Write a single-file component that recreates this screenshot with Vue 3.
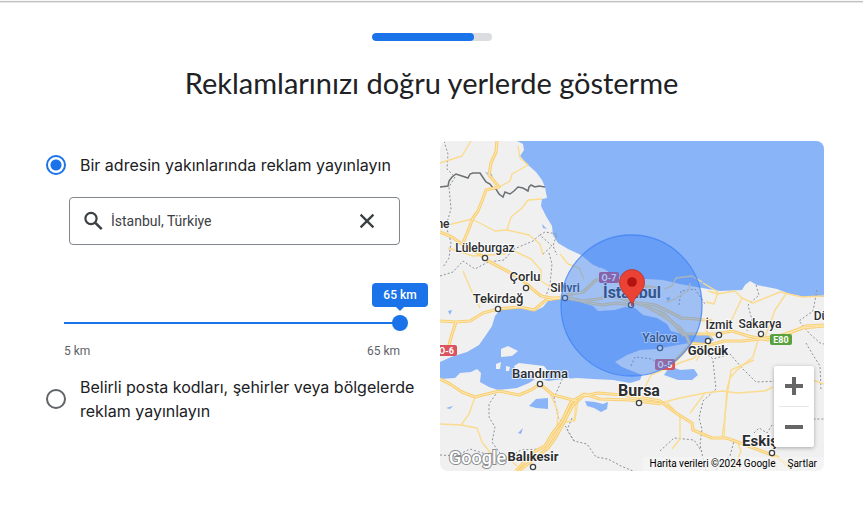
<script setup>
import { ref } from 'vue'

const mode = ref('near')
const place = ref('İstanbul, Türkiye')
const radius = ref(65)

const highways = [
  'M497 141 L496 152 L491 163 L489 175 L499 187 L486 190 L482 201 L478 211 L473 218 L468 231 L463 243',
  'M440 232 L452 237 L466 247 L478 253 L490 262 L507 271 L521 279 L530 287 L541 296 L552 298 L565 298 L577 300 L590 303 L603 305 L617 303 L631 305',
  'M440 321 L456 322 L470 321 L483 313 L498 309 L520 307 L534 310 L546 300 L565 297',
  'M456 322 L452 334 L448 349',
  'M566 295 L583 292 L596 280 L611 279 L626 284 L642 286 L655 288 L660 297',
  'M560 296 L582 301 L598 299 L612 296 L630 301 L646 306 L657 312 L668 319 L680 328 L687 337 L690 345 L678 358 L667 368',
  'M640 303 L655 305 L670 312 L681 318 L696 319 L712 321',
  'M652 309 L664 314 L675 325 L684 336',
  'M684 334 L699 334 L717 334 L732 331 L748 336 L768 340 L792 332 L806 326 L824 325',
  'M690 343 L710 345 L724 341 L742 341 L760 339 L782 335 L803 328 L824 326',
  'M519 471 L534 459 L548 448 L556 437 L563 424 L573 405 L583 396 L598 393 L622 395 L643 398 L660 401 L676 413 L692 423 L693 430 L712 438 L726 438 L735 441 L756 449 L777 457 L791 468',
  'M516 471 L532 453 L545 446 L552 434 L562 421 L571 402 L584 394 L600 399 L630 400 L661 404',
  'M440 379 L450 384 L462 392 L475 397 L499 391 L519 395 L531 390 L540 384 L553 395 L577 401'
]

const roads = [
  'M440 163 L462 156 L471 141',
  'M518 146 L520 158 L528 165 L512 174 L510 181 L499 187',
  'M440 227 L456 223 L472 219 L495 231 L507 230 L529 235 L540 244 L543 255',
  'M507 230 L511 217 L522 208 L528 200 L542 199',
  'M448 248 L473 256 L506 254',
  'M463 271 L469 285 L472 292 L480 308',
  'M514 251 L531 259 L541 270 L541 281 L549 286 L560 285',
  'M475 397 L469 414 L461 425 L477 428 L482 442 L492 455 L507 457 L517 466',
  'M440 424 L461 425',
  'M551 395 L558 412 L557 429 L548 448',
  'M578 401 L575 420 L563 423',
  'M576 401 L574 422',
  'M690 413 L705 393 L722 391 L737 393 L765 391 L773 387',
  'M644 389 L651 375 L663 370 L682 362 L694 358 L703 347',
  'M640 402 L657 404 L680 398 L705 393',
  'M667 402 L680 417 L680 439 L672 449',
  'M731 374 L727 389 L725 417 L722 437',
  'M754 360 L731 370 L728 390 L725 414 L724 438',
  'M758 340 L753 357 L737 370 L730 378',
  'M708 291 L718 294 L735 291 L742 298 L731 321 L720 326',
  'M703 283 L718 292 L714 304 L706 302',
  'M742 298 L753 303 L780 292 L802 297 L824 296',
  'M786 294 L775 310 L770 324 L765 337',
  'M664 289 L672 286 L676 278 L692 276 L702 282',
  'M560 254 L568 264 L579 268 L584 279',
  'M737 441 L741 451 L733 471',
  'M773 456 L777 470',
  'M824 384 L807 378 L782 367',
  'M690 283 L689 290 L675 299 L666 302',
  'M705 329 L711 337 L696 361'
]

const borders = [
  'M444 141 L448 154 L447 169 L455 177 L449 187 L451 209 L446 226 L451 242 L449 258 L443 267',
  'M543 254 L552 246 L540 235 L545 232 L557 234 L553 246 L557 255',
  'M440 276 L453 272 L463 261 L475 269 L488 262 L504 260 L514 249 L533 241 L541 234',
  'M549 253 L552 264 L550 285 L544 301',
  'M498 391 L489 404 L489 417 L495 427 L492 442 L502 456',
  'M440 455 L456 456 L470 449 L489 455 L506 459 L521 450 L540 449',
  'M564 375 L554 398 L558 417 L566 427 L574 441 L587 444 L596 457 L608 459 L621 466 L633 471',
  'M572 418 L567 430 L574 441',
  'M756 285 L759 295 L748 305 L752 320 L747 331',
  'M817 290 L813 311 L799 321 L810 334 L820 343 L824 344',
  'M631 366 L635 357 L652 359 L661 366',
  'M679 305 L681 291 L695 289 L705 304',
  'M699 347 L713 359 L730 354 L742 368 L756 382 L781 381 L795 382',
  'M713 361 L716 389 L703 401 L699 418 L702 429 L700 445 L706 471',
  'M660 451 L674 438 L694 440 L702 452',
  'M754 433 L759 428 L767 433 L772 425 L782 429 L793 419 L824 419',
  'M716 470 L730 456 L734 441',
  'M806 343 L813 355 L820 366 L821 390'
]

const cities = [
  { name: 'Lüleburgaz', x: 485, y: 252, size: 12, dot: [485, 258] },
  { name: 'Çorlu', x: 525, y: 281, size: 13, dot: [526, 288] },
  { name: 'Silivri', x: 565, y: 292, size: 12, dot: [565, 298] },
  { name: 'Tekirdağ', x: 498, y: 303, size: 13, dot: [498, 309] },
  { name: 'Bandırma', x: 540, y: 378, size: 13, dot: [540, 384] },
  { name: 'Bursa', x: 639, y: 396, size: 16, dot: [639, 403], bold: true },
  { name: 'Balıkesir', x: 533, y: 461, size: 13, dot: [533, 467], bold: true },
  { name: 'İzmit', x: 719, y: 329, size: 12, dot: [719, 335] },
  { name: 'Sakarya', x: 760, y: 328, size: 12, dot: [761, 334] },
  { name: 'Gölcük', x: 708, y: 355, size: 13, dot: [708, 341], bold: true },
  { name: 'Eskişehir', x: 773, y: 446, size: 15, dot: [772, 453], bold: true },
  { name: 'Yalova', x: 660, y: 342, size: 12, dot: [660, 348] },
  { name: 'İstanbul', x: 632, y: 298, size: 16, dot: [631, 305], bold: true },
  { name: 'Dü', x: 821, y: 320, size: 12 },
  { name: 'ne', x: 443, y: 228, size: 12 }
]

const shields = [
  { name: 'O-7', x: 599, y: 272, w: 20, color: '#c4466a' },
  { name: 'O-6', x: 436, y: 345, w: 21, color: '#d9545f' },
  { name: 'O-5', x: 655, y: 359, w: 20, color: '#d9545f' },
  { name: 'E80', x: 770, y: 334, w: 22, color: '#58a23e' }
]
</script>

<template>
  <div class="page">
    <div class="progress" role="progressbar" aria-valuenow="85" aria-valuemin="0" aria-valuemax="100">
      <div class="progress-fill"></div>
    </div>
    <h1>Reklamlarınızı doğru yerlerde gösterme</h1>

    <main class="content">
      <form class="options" @submit.prevent>
        <label class="option">
          <input v-model="mode" type="radio" name="mode" value="near" />
          <span>Bir adresin yakınlarında reklam yayınlayın</span>
        </label>

        <div class="search">
          <label class="search-icon" for="place">
            <svg viewBox="0 0 24 24" width="24" height="24" aria-hidden="true">
              <circle cx="9" cy="9.5" r="5.6" fill="none" stroke="#3c4043" stroke-width="2.2" />
              <path d="M13.100 13.600L19.700 20.200" stroke="#3c4043" stroke-width="2.600" />
            </svg>
          </label>
          <input id="place" v-model="place" type="text" />
          <button type="button" class="clear" @click="place = ''">
            <svg viewBox="0 0 24 24" width="24" height="24" aria-hidden="true">
              <path d="M5.6 5.6L18.4 18.4M18.4 5.6L5.6 18.4" stroke="#3c4043" stroke-width="2.3" />
            </svg>
          </button>
        </div>

        <div class="range">
          <output class="bubble" for="radius">{{ radius }} km</output>
          <input id="radius" v-model="radius" type="range" min="5" max="65" />
          <label class="range-labels" for="radius"><span>5 km</span><span>65 km</span></label>
        </div>

        <label class="option">
          <input v-model="mode" type="radio" name="mode" value="regions" />
          <span>Belirli posta kodları, şehirler veya bölgelerde reklam yayınlayın</span>
        </label>
      </form>

      <section class="map">
        <svg class="map-canvas" viewBox="440 141 384 330" preserveAspectRatio="xMidYMid slice">
          <rect x="440" y="141" width="384" height="330" fill="#f0f0f0" />

          <g fill="#8ab4f8">
            <path d="M517 141L523 144L524 150L520 156L528 165L536 172L542 180L545 187L547 198L542 199L541 206L546 216L552 226L553 235L558 243L568 249L581 255L592 264L604 269L614 275L630 280L647 279L663 280L680 284L702 288L720 291L742 290L745 285L750 281L757 285L777 289L790 294L803 297L824 297V141Z" />
            <path d="M440 362L451 357L467 352L479 345L486 335L492 326L495 316L500 310L519 308L535 311L543 307L548 301L558 299L565 299L580 302L593 306L598 311L615 310L625 307L635 308L643 315L657 318L667 324L671 331L685 335L704 334L711 336L714 340L705 345L690 343L683 344L667 347L657 349L640 350L627 355L615 362L622 367L632 371L642 375L640 380L630 383L613 380L593 379L577 378L563 379L548 381L537 378L529 383L517 388L498 390L489 387L480 382L481 373L477 369L471 372L460 373L455 378L440 379Z" />
            <path d="M664 375L670 366L680 370L694 369L698 375L692 380L678 380Z" />
            <path d="M529 406L536 399L548 398V409L536 408Z" />
            <path d="M585 401L595 402L603 404L608 402L607 409L601 412L594 408L587 406Z" />
            <path d="M446 408L453 406L450 409Z" />
            <path d="M518 433L523 428L521 434Z" />
            <path d="M448 311L452 310L450 315Z" />
            <path d="M542 224L547 229L543 228Z" />
            <path d="M485 172L492 174L493 180Z" />
            <path d="M592 264L599 262L600 268Z" />
            <path d="M666 298L670 297L669 302Z" />
          </g>
          <g fill="#f0f0f0">
            <path d="M501 349L508 346L518 351L512 356L501 357Z" />
            <path d="M496 364L501 362L500 369L496 369Z" />
            <path d="M506 366L510 367L509 371L506 371Z" />
            <path d="M514 366L519 363L544 366L548 371L547 379L535 380L530 373L516 371Z" />
          </g>

          <g class="borders"><path v-for="d in borders" :key="d" :d="d" /></g>
          <path class="frontier" d="M440 187L448 186L449 181L452 177L456 174L462 176L468 178L470 174L473 173L480 173L484 179L486 182L490 184L493 188L496 189L499 194L503 197L505 192L510 194L514 191L518 187L523 188L528 191L529 187L531 185L535 187L539 186L545 187" />
          <g class="roads"><path v-for="d in roads" :key="d" :d="d" /></g>
          <g class="highways"><path v-for="d in highways" :key="d" :d="d" /></g>
          <g class="highway-core"><path v-for="d in highways" :key="d" :d="d" /></g>

          <g v-for="s in shields" :key="s.name">
            <rect :x="s.x" :y="s.y" :width="s.w" height="11" rx="2" :fill="s.color" />
            <text class="shield" :x="s.x + s.w / 2" :y="s.y + 9">{{ s.name }}</text>
          </g>
          <g v-for="c in cities" :key="c.name" class="city">
            <circle v-if="c.dot" :cx="c.dot[0]" :cy="c.dot[1]" r="2.6" />
            <text :x="c.x" :y="c.y" :font-size="c.size" :class="{ bold: c.bold }">{{ c.name }}</text>
          </g>

          <circle cx="631.5" cy="305.5" r="70.5" fill="#4285f4" fill-opacity=".46" stroke="#4285f4" stroke-opacity=".8" stroke-width="1.3" />

          <path d="M632 306C630.500 296 619.500 293 619.500 282A12.500 12.500 0 0 1 644.500 282C644.500 293 633.500 296 632 306Z" fill="#ea4335" stroke="#b9312b" stroke-width=".8" />
          <circle cx="632" cy="282" r="4.800" fill="#b31412" />

          <text class="brand" x="449" y="464">Google</text>
        </svg>

        <div class="zoom">
          <button type="button" aria-label="Yakınlaştır">
            <svg viewBox="0 0 18 18" width="18" height="18"><path d="M0 9H18M9 0V18" stroke="#666" stroke-width="4" /></svg>
          </button>
          <button type="button" aria-label="Uzaklaştır">
            <svg viewBox="0 0 18 18" width="18" height="18"><path d="M0 9H18" stroke="#666" stroke-width="4" /></svg>
          </button>
        </div>
        <div class="credits">
          <span>Harita verileri ©2024 Google</span>
          <a href="#">Şartlar</a>
        </div>
      </section>
    </main>
  </div>
</template>

<style>
body {
  margin: 0;
  background: #fff;
}
</style>

<style scoped>
.page {
  padding: 32px 0 50px;
  border-top: 1px solid #f7f8f7;
  box-shadow: inset 0 1px 0 #c0c3c1, inset 0 2px 0 #e4e6e4;
  color: #202124;
  font-family: Roboto, "Liberation Sans", sans-serif;
}
.progress {
  width: 120px;
  height: 8px;
  margin: 0 auto;
  border-radius: 4px;
  background: #dadce0;
  overflow: hidden;
}
.progress-fill {
  width: 85%;
  height: 100%;
  border-radius: 4px;
  background: #1a73e8;
}
h1 {
  margin: 24px 0 40px;
  font: 400 29px/36px Lato, sans-serif;
  text-align: center;
}
.content {
  display: grid;
  grid-template-columns: 382fr 384fr;
  gap: 12px;
  align-items: start;
  padding: 0 39px 0 46px;
}
.options {
  padding-top: 12px;
}
.option {
  display: flex;
  align-items: center;
  gap: 14px;
  font: 400 16px/24px Inter, sans-serif;
}
.option input {
  appearance: none;
  flex: none;
  width: 20px;
  height: 20px;
  margin: 0;
  border: 2px solid #5f6368;
  border-radius: 50%;
}
.option input:checked {
  border-color: #1a73e8;
  background: radial-gradient(circle, #1a73e8 5px, transparent 6px);
}
.search {
  display: flex;
  align-items: center;
  height: 48px;
  margin: 20px 28px 0 23px;
  padding: 0 20px 0 12px;
  box-sizing: border-box;
  border: 1px solid #80868b;
  border-radius: 4px;
}
.search svg {
  display: block;
}
.search input {
  flex: 1;
  min-width: 0;
  padding: 0 5px;
  border: 0;
  outline: 0;
  background: none;
  color: #3c4043;
  font: 400 14px/20px Roboto, sans-serif;
}
.clear {
  padding: 0;
  border: 0;
  background: none;
}
.range {
  position: relative;
  margin: 70px 20px 16px 10px;
}
.range input {
  appearance: none;
  display: block;
  width: 100%;
  height: 16px;
  margin: 0;
  background: linear-gradient(#1a73e8, #1a73e8) center / calc(100% - 16px) 2px no-repeat;
}
.range input::-webkit-slider-thumb {
  appearance: none;
  width: 16px;
  height: 16px;
  border-radius: 50%;
  background: #1a73e8;
}
.bubble {
  position: absolute;
  right: -20px;
  bottom: 52px;
  width: 56px;
  border-radius: 4px;
  background: #1a73e8;
  color: #fff;
  font: 500 12px/24px Roboto, sans-serif;
  text-align: center;
}
.bubble::after {
  content: "";
  position: absolute;
  left: 24px;
  top: 24px;
  border: 4px solid transparent;
  border-top-color: #1a73e8;
}
.range-labels {
  display: flex;
  justify-content: space-between;
  padding: 12px 8px 0;
  color: #5f6368;
  font-size: 12px;
  line-height: 16px;
}
.map {
  position: relative;
  aspect-ratio: 384 / 330;
  border-radius: 8px;
  overflow: hidden;
}
.map-canvas {
  display: block;
  width: 100%;
  height: 100%;
}
.borders path {
  fill: none;
  stroke: #8d9094;
  stroke-width: 1;
  stroke-dasharray: 2 2;
}
.frontier {
  fill: none;
  stroke: #6d7073;
  stroke-width: 1.5;
}
.roads path {
  fill: none;
  stroke: #fbdc8f;
  stroke-width: 1.4;
  stroke-linejoin: round;
}
.highways path {
  fill: none;
  stroke: #f9cf74;
  stroke-width: 3.2;
  stroke-linejoin: round;
}
.highway-core path {
  fill: none;
  stroke: #fdeab8;
  stroke-width: 1;
}
.shield {
  fill: #fff;
  font-size: 9px;
  font-weight: 700;
  text-anchor: middle;
}
.city circle {
  fill: #fff;
  stroke: #3c4043;
  stroke-width: 1.3;
}
.city text {
  fill: #2b2d30;
  font-weight: 500;
  text-anchor: middle;
  paint-order: stroke;
  stroke: #fff;
  stroke-width: 2px;
  stroke-opacity: .8;
}
.city text.bold {
  font-weight: 700;
}
.brand {
  fill: #fff;
  stroke: #8a8d90;
  stroke-width: 2px;
  paint-order: stroke;
  font-size: 18px;
  font-weight: 500;
}
.zoom {
  position: absolute;
  right: 10px;
  bottom: 24px;
  display: flex;
  flex-direction: column;
  width: 40px;
  border-radius: 2px;
  background: #fff;
  box-shadow: 0 1px 4px rgba(0, 0, 0, .3);
}
.zoom button {
  display: grid;
  place-items: center;
  height: 40px;
  padding: 0;
  border: 0;
  background: none;
}
.zoom button + button::before {
  content: "";
  width: 30px;
  height: 1px;
  background: #e6e6e6;
}
.zoom button + button {
  grid-template-rows: 1px 1fr;
  height: 41px;
}
.credits {
  position: absolute;
  right: 0;
  bottom: 0;
  display: flex;
  gap: 12px;
  padding: 0 7px;
  background: rgba(245, 245, 245, .7);
  color: #000;
  font-size: 10px;
  line-height: 14px;
}
.credits a {
  color: inherit;
  text-decoration: none;
}
</style>
